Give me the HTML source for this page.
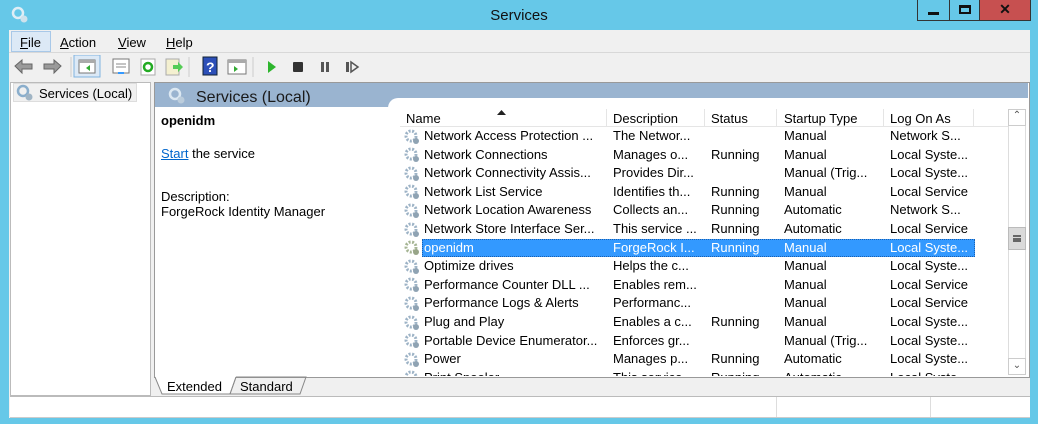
<!DOCTYPE html>
<html><head><meta charset="utf-8"><style>
*{margin:0;padding:0;box-sizing:border-box}
body{width:1038px;height:424px;background:#66c8e8;font-family:"Liberation Sans",sans-serif;font-size:12.5px;color:#000;position:relative;overflow:hidden}
.abs{position:absolute}
.t{white-space:nowrap}
</style></head><body>
<svg class="abs" style="left:11px;top:6px" width="18" height="18"><circle cx="7" cy="7" r="5" fill="none" stroke="#dfeef6" stroke-width="2.5"/><circle cx="13" cy="13" r="3.5" fill="#cfe2ec"/></svg>
<div class="abs t" style="left:0;width:1038px;top:7px;text-align:center;font-size:15px;color:#111">Services</div>
<div class="abs" style="left:917px;top:0;width:33px;height:21px;border:1px solid #333;border-top:none;background:#66c8e8"><div class="abs" style="left:10px;top:12px;width:11px;height:3px;background:#111"></div></div>
<div class="abs" style="left:949px;top:0;width:31px;height:21px;border:1px solid #333;border-top:none;background:#66c8e8"><div class="abs" style="left:9px;top:5px;width:12px;height:9px;border:2px solid #111;border-top-width:3px"></div></div>
<div class="abs t" style="left:979px;top:0;width:52px;height:21px;background:#c75050;border:1px solid #333;border-top:none;text-align:center;font-weight:bold;font-size:14px;line-height:19px;color:#111">✕</div>
<div class="abs" style="left:9px;top:30px;width:1021px;height:388px;background:#f0f0f0"></div>
<div class="abs" style="left:9px;top:52px;width:1021px;height:1px;background:#d8d8d8"></div>
<div class="abs" style="left:11px;top:31px;width:40px;height:21px;background:#dce9f6;border:1px solid #a8c8e8"></div>
<div class="abs t" style="left:20px;top:35px;font-size:13px"><u>F</u>ile</div>
<div class="abs t" style="left:60px;top:35px;font-size:13px"><u>A</u>ction</div>
<div class="abs t" style="left:118px;top:35px;font-size:13px"><u>V</u>iew</div>
<div class="abs t" style="left:166px;top:35px;font-size:13px"><u>H</u>elp</div>
<svg class="abs" style="left:12px;top:55px" width="370" height="24">
<path d="M3 11 L10 5 V9 H20 V14 H10 V18 Z" fill="#9a9a9a" stroke="#666"/>
<path d="M49 11 L42 5 V9 H32 V14 H42 V18 Z" fill="#9a9a9a" stroke="#666"/>
<line x1="59" y1="2" x2="59" y2="22" stroke="#ccc"/>
<rect x="62" y="0" width="26" height="22" fill="#dce9f6" stroke="#7fb3e0"/>
<rect x="67" y="5" width="16" height="13" fill="#fff" stroke="#777"/><rect x="67" y="5" width="16" height="3" fill="#aaa"/><path d="M78 10 v6 l-4 -3z" fill="#3a3"/>
<rect x="101" y="4" width="16" height="14" fill="#fff" stroke="#777"/><line x1="104" y1="9" x2="114" y2="9" stroke="#888"/><line x1="104" y1="12" x2="114" y2="12" stroke="#888"/><rect x="106" y="17" width="6" height="2" fill="#39f"/>
<rect x="129" y="4" width="14" height="16" fill="#fff" stroke="#aaa"/><circle cx="136" cy="12" r="4" fill="none" stroke="#2a2" stroke-width="2.5"/>
<rect x="154" y="4" width="13" height="16" fill="#f4f0d0" stroke="#aaa"/><path d="M161 10 h5 v-3 l5 5 -5 5 v-3 h-5z" fill="#5c5"/>
<line x1="177" y1="2" x2="177" y2="22" stroke="#ccc"/>
<rect x="191" y="2" width="14" height="18" fill="#2c4fb8" stroke="#123"/><text x="194" y="17" fill="#fff" font-size="14" font-weight="bold" font-family="Liberation Sans">?</text>
<rect x="216" y="5" width="18" height="14" fill="#fff" stroke="#777"/><rect x="216" y="5" width="18" height="3" fill="#aaa"/><path d="M222 11 v6 l4 -3z" fill="#3a3"/>
<line x1="241" y1="2" x2="241" y2="22" stroke="#ccc"/>
<path d="M256 6 L264 12 L256 18 Z" fill="#2db52d"/>
<rect x="281" y="7" width="10" height="10" rx="1" fill="#333"/>
<rect x="309" y="7" width="3" height="10" fill="#555"/><rect x="314" y="7" width="3" height="10" fill="#555"/>
<rect x="334" y="7" width="3" height="10" fill="#555"/><path d="M339 7 L346 12 L339 17Z" fill="none" stroke="#555" stroke-width="1.5"/>
</svg>
<div class="abs" style="left:10px;top:82px;width:141px;height:314px;background:#fff;border:1px solid #bbb"></div>
<div class="abs" style="left:13px;top:83px;width:124px;height:19px;background:#f0f0f0;border:1px solid #ddd"></div>
<svg class="abs" style="left:16px;top:84px" width="18" height="18"><circle cx="7" cy="7" r="5" fill="none" stroke="#8aaecc" stroke-width="2.5"/><circle cx="13" cy="13" r="3.5" fill="#a0b4c4"/></svg>
<div class="abs t" style="left:39px;top:86px;font-size:13px">Services (Local)</div>
<div class="abs" style="left:154px;top:82px;width:876px;height:296px;background:#fff;border:1px solid #999"></div>
<div class="abs" style="left:155px;top:83px;width:873px;height:24px;background:#9ab4d0"></div>
<svg class="abs" style="left:168px;top:87px" width="18" height="18"><circle cx="7" cy="7" r="5" fill="none" stroke="#dce8f2" stroke-width="2.5"/><circle cx="13" cy="13" r="3.5" fill="#bccddc"/></svg>
<div class="abs t" style="left:196px;top:89px;font-size:16px;color:#1a1a1a">Services (Local)</div>
<div class="abs" style="left:388px;top:98px;width:640px;height:20px;background:#fff;border-top-left-radius:10px"></div>
<div class="abs t" style="left:161px;top:113px;font-weight:bold;font-size:13px">openidm</div>
<div class="abs t" style="left:161px;top:146px;font-size:13px"><span style="color:#06c;text-decoration:underline">Start</span> the service</div>
<div class="abs t" style="left:161px;top:189px;font-size:13px">Description:</div>
<div class="abs t" style="left:161px;top:204px;font-size:13px">ForgeRock Identity Manager</div>
<div class="abs" style="left:400px;top:108px;width:608px;height:19px;border-bottom:1px solid #e5e5e5"></div>
<div class="abs" style="left:606px;top:109px;width:1px;height:18px;background:#e5e5e5"></div>
<div class="abs" style="left:704px;top:109px;width:1px;height:18px;background:#e5e5e5"></div>
<div class="abs" style="left:776px;top:109px;width:1px;height:18px;background:#e5e5e5"></div>
<div class="abs" style="left:883px;top:109px;width:1px;height:18px;background:#e5e5e5"></div>
<div class="abs" style="left:973px;top:109px;width:1px;height:18px;background:#e5e5e5"></div>
<div class="abs t" style="left:406px;top:111px;font-size:13px">Name</div>
<svg class="abs" style="left:497px;top:110px" width="9" height="5"><path d="M0 5 L4.5 0 L9 5Z" fill="#222"/></svg>
<div class="abs t" style="left:613px;top:111px;font-size:13px">Description</div>
<div class="abs t" style="left:711px;top:111px;font-size:13px">Status</div>
<div class="abs t" style="left:784px;top:111px;font-size:13px">Startup Type</div>
<div class="abs t" style="left:890px;top:111px;font-size:13px">Log On As</div>
<div id="box" class="abs" style="left:400px;top:127px;width:608px;height:249px;overflow:hidden;font-size:13px">
<svg width="0" height="0" style="position:absolute"><defs><g id="g"><circle cx="7" cy="7" r="5" fill="none" stroke="#9db3c6" stroke-width="3" stroke-dasharray="2 1.5"/><circle cx="7" cy="7" r="2" fill="#fff"/><circle cx="12" cy="12" r="3" fill="#8fa3b3"/></g></defs></svg>
<div style="position:absolute;left:22px;top:111.6px;width:553px;height:18.6px;background:#3399ff;border:1px dotted #1a5fb0"></div>
</div>
<div class="abs" style="left:1008px;top:109px;width:18px;height:266px;background:#fff;border:1px solid #ddd"></div>
<div class="abs" style="left:1008px;top:109px;width:18px;height:17px;border:1px solid #ccc;text-align:center;font-size:10px;color:#555">&#8963;</div>
<div class="abs" style="left:1008px;top:358px;width:18px;height:17px;border:1px solid #ccc;text-align:center;font-size:10px;color:#555;line-height:14px">&#8964;</div>
<div class="abs" style="left:1008px;top:227px;width:18px;height:23px;background:#dadada;border:1px solid #bbb"><div class="abs" style="left:4px;top:7px;width:8px;height:7px;border-top:2px solid #666;border-bottom:2px solid #666"></div><div class="abs" style="left:4px;top:10px;width:8px;height:1.5px;background:#666"></div></div>
<div class="abs" style="left:155px;top:377px;width:873px;height:1px;background:#999"></div>
<svg class="abs" style="left:152px;top:376px" width="160" height="20"><path d="M3 1 L10 18 H78 L84 1" fill="#fff" stroke="#888"/><path d="M84 1 L78 18 M84 1 H154 L148 18 H78" fill="none" stroke="#888"/></svg>
<div class="abs t" style="left:167px;top:379px;font-size:13px">Extended</div>
<div class="abs t" style="left:240px;top:379px;font-size:13px">Standard</div>
<div class="abs" style="left:10px;top:396px;width:1020px;height:22px;background:#fff;border-top:1px solid #bbb;border-bottom:1px solid #ccc"></div>
<div class="abs" style="left:776px;top:397px;width:1px;height:20px;background:#ddd"></div>
<div class="abs" style="left:930px;top:397px;width:1px;height:20px;background:#ddd"></div>
<script>
var d=[["Network Access Protection ...","The Networ...","","Manual","Network S..."],
["Network Connections","Manages o...","Running","Manual","Local Syste..."],
["Network Connectivity Assis...","Provides Dir...","","Manual (Trig...","Local Syste..."],
["Network List Service","Identifies th...","Running","Manual","Local Service"],
["Network Location Awareness","Collects an...","Running","Automatic","Network S..."],
["Network Store Interface Ser...","This service ...","Running","Automatic","Local Service"],
["openidm","ForgeRock I...","Running","Manual","Local Syste..."],
["Optimize drives","Helps the c...","","Manual","Local Syste..."],
["Performance Counter DLL ...","Enables rem...","","Manual","Local Service"],
["Performance Logs & Alerts","Performanc...","","Manual","Local Service"],
["Plug and Play","Enables a c...","Running","Manual","Local Syste..."],
["Portable Device Enumerator...","Enforces gr...","","Manual (Trig...","Local Syste..."],
["Power","Manages p...","Running","Automatic","Local Syste..."],
["Print Spooler","This service ...","Running","Automatic","Local Syste..."]];
var box=document.getElementById('box');
var x=[24,213,311,384,490],h='';
d.forEach(function(r,i){var y=i*18.6,sel=i==6,col=sel?'#fff':'#000';
h+='<svg style="position:absolute;left:4px;top:'+(y+1.5)+'px" width="16" height="16"><use href="#g" '+(sel?'style="filter:hue-rotate(-120deg)"':'')+'/></svg>';
r.forEach(function(t,j){h+='<span style="position:absolute;white-space:nowrap;left:'+x[j]+'px;top:'+(y+1)+'px;color:'+col+'">'+t.replace('&','&amp;')+'</span>'})});
box.insertAdjacentHTML('beforeend',h);
</script>
</body></html>
